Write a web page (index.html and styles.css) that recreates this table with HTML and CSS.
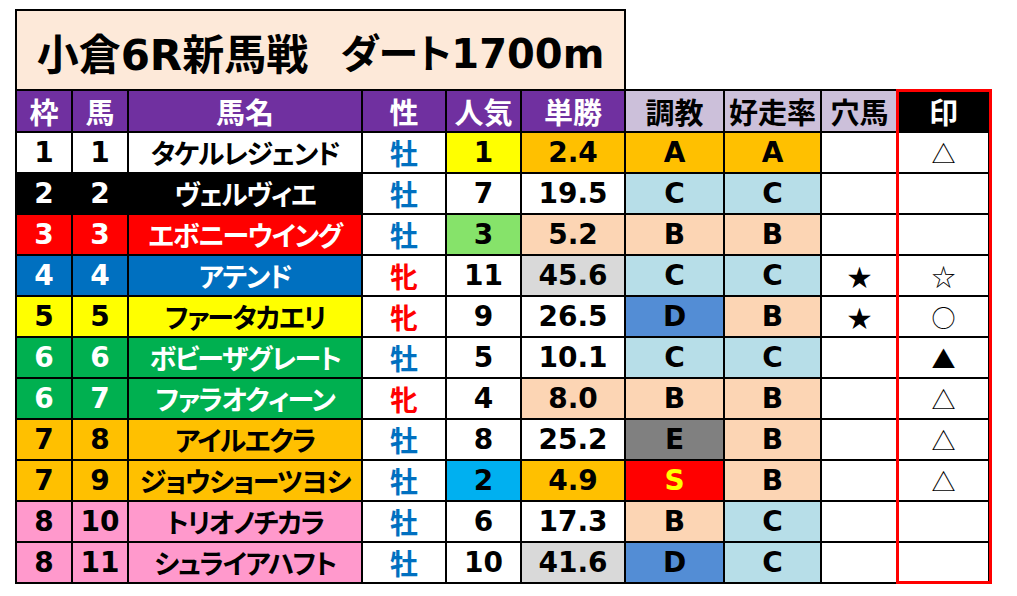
FILE: index.html
```html
<!DOCTYPE html>
<html lang="ja">
<head>
<meta charset="utf-8">
<title>小倉6R新馬戦</title>
<link rel="stylesheet" href="styles.css">
</head>
<body>
<div class="page">
  <div class="title"><span class="title-main">小倉6R新馬戦</span><span class="title-gap"> </span><span class="title-sub">ダート1700m</span></div>
  <div class="grid">
    <div class="c h p">枠</div>
    <div class="c h p">馬</div>
    <div class="c h p">馬名</div>
    <div class="c h p">性</div>
    <div class="c h p">人気</div>
    <div class="c h p">単勝</div>
    <div class="c h l">調教</div>
    <div class="c h l">好走率</div>
    <div class="c h l">穴馬</div>
    <div class="c h k">印</div>

    <div class="c n f1">1</div><div class="c n f1">1</div><div class="c nm f1">タケルレジェンド</div><div class="c sx m">牡</div><div class="c n yl">1</div><div class="c o og">2.4</div><div class="c o og">A</div><div class="c o og">A</div><div class="c mk"></div><div class="c mk">△</div>

    <div class="c n f2">2</div><div class="c n f2">2</div><div class="c nm f2">ヴェルヴィエ</div><div class="c sx m">牡</div><div class="c n">7</div><div class="c o">19.5</div><div class="c o lb">C</div><div class="c o lb">C</div><div class="c mk"></div><div class="c mk"></div>

    <div class="c n f3">3</div><div class="c n f3">3</div><div class="c nm f3">エボニーウイング</div><div class="c sx m">牡</div><div class="c n gr">3</div><div class="c o pc">5.2</div><div class="c o pc">B</div><div class="c o pc">B</div><div class="c mk"></div><div class="c mk"></div>

    <div class="c n f4">4</div><div class="c n f4">4</div><div class="c nm f4">アテンド</div><div class="c sx fm">牝</div><div class="c n">11</div><div class="c o gy">45.6</div><div class="c o lb">C</div><div class="c o lb">C</div><div class="c mk">★</div><div class="c mk">☆</div>

    <div class="c n f5">5</div><div class="c n f5">5</div><div class="c nm f5">ファータカエリ</div><div class="c sx fm">牝</div><div class="c n">9</div><div class="c o">26.5</div><div class="c o db">D</div><div class="c o pc">B</div><div class="c mk">★</div><div class="c mk">○</div>

    <div class="c n f6">6</div><div class="c n f6">6</div><div class="c nm f6">ボビーザグレート</div><div class="c sx m">牡</div><div class="c n">5</div><div class="c o">10.1</div><div class="c o lb">C</div><div class="c o lb">C</div><div class="c mk"></div><div class="c mk">▲</div>

    <div class="c n f6">6</div><div class="c n f6">7</div><div class="c nm f6">ファラオクィーン</div><div class="c sx fm">牝</div><div class="c n">4</div><div class="c o pc">8.0</div><div class="c o pc">B</div><div class="c o pc">B</div><div class="c mk"></div><div class="c mk">△</div>

    <div class="c n f7">7</div><div class="c n f7">8</div><div class="c nm f7">アイルエクラ</div><div class="c sx m">牡</div><div class="c n">8</div><div class="c o">25.2</div><div class="c o dg">E</div><div class="c o pc">B</div><div class="c mk"></div><div class="c mk">△</div>

    <div class="c n f7">7</div><div class="c n f7">9</div><div class="c nm f7">ジョウショーツヨシ</div><div class="c sx m">牡</div><div class="c n cy">2</div><div class="c o og">4.9</div><div class="c o rs">S</div><div class="c o pc">B</div><div class="c mk"></div><div class="c mk">△</div>

    <div class="c n f8">8</div><div class="c n f8">10</div><div class="c nm f8">トリオノチカラ</div><div class="c sx m">牡</div><div class="c n">6</div><div class="c o">17.3</div><div class="c o pc">B</div><div class="c o lb">C</div><div class="c mk"></div><div class="c mk"></div>

    <div class="c n f8">8</div><div class="c n f8">11</div><div class="c nm f8">シュライアハフト</div><div class="c sx m">牡</div><div class="c n">10</div><div class="c o gy">41.6</div><div class="c o db">D</div><div class="c o lb">C</div><div class="c mk"></div><div class="c mk"></div>

    <div class="mark-frame"></div>
  </div>
</div>
</body>
</html>
```

FILE: styles.css
```css
html, body {
  margin: 0;
  padding: 0;
  background: #ffffff;
}

.page {
  padding: 9px 0 0 15px;
  font-family: "DejaVu Sans", "Noto Sans CJK JP", sans-serif;
  font-weight: bold;
  color: #000;
}

.title {
  box-sizing: border-box;
  width: 611px;
  height: 80px;
  border: 2px solid #000;
  border-bottom: none;
  background: #fde9d9;
  display: flex;
  align-items: center;
  justify-content: center;
  padding-top: 2px;
  white-space: nowrap;
}

.title-main {
  font-size: 42px;
}

.title-gap {
  display: inline-block;
  width: 32px;
}

.title-sub {
  font-size: 40px;
  font-feature-settings: "palt";
}

.grid {
  position: relative;
  display: grid;
  width: max-content;
  background: #000;
  padding: 2px;
  gap: 2px;
  grid-template-columns: 54px 54px 232px 82px 73px 102px 97px 95px 75px 89px;
  grid-template-rows: 40px repeat(11, 39px);
}

.c {
  background: #fff;
  display: flex;
  align-items: center;
  justify-content: center;
  white-space: nowrap;
  overflow: hidden;
}

.h {
  font-size: 29px;
  font-family: "Noto Sans CJK JP", sans-serif;
}
.p { background: #7030a0; color: #fff; }
.l { background: #ccc0da; color: #000; }
.k { background: #000; color: #fff; }

.n { font-size: 28px; }
.nm {
  font-size: 27px;
  letter-spacing: -1.5px;
  font-family: "Noto Sans CJK JP", sans-serif;
  font-feature-settings: "palt";
}
.sx {
  font-size: 28px;
  font-family: "Noto Sans CJK JP", sans-serif;
}
.m { color: #0070c0; }
.fm { color: #ff0000; }
.o { font-size: 28px; }
.mk {
  font-size: 24px;
  font-weight: normal;
  font-family: "Noto Sans CJK JP", sans-serif;
}

/* frame colors */
.f1 { background: #fff; color: #000; }
.f2 { background: #000; color: #fff; }
.f3 { background: #ff0000; color: #fff; }
.f4 { background: #0070c0; color: #fff; }
.f5 { background: #ffff00; color: #000; }
.f6 { background: #00b050; color: #fff; }
.f7 { background: #ffc000; color: #000; }
.f8 { background: #ff99cc; color: #000; }

/* value colors */
.yl { background: #ffff00; }
.gr { background: #86e36a; }
.cy { background: #00b0f0; }
.og { background: #ffc000; }
.pc { background: #fcd5b4; }
.lb { background: #b7dee8; }
.gy { background: #d9d9d9; }
.db { background: #538dd5; }
.dg { background: #808080; }
.rs { background: #ff0000; color: #ffff00; }

/* red highlight frame lying over the 印 column */
.mark-frame {
  position: absolute;
  grid-column: 10;
  grid-row: 1 / -1;
  top: -2px;
  bottom: -2px;
  left: -3px;
  right: -2px;
  border: 3px solid #ff0000;
  pointer-events: none;
}
```
